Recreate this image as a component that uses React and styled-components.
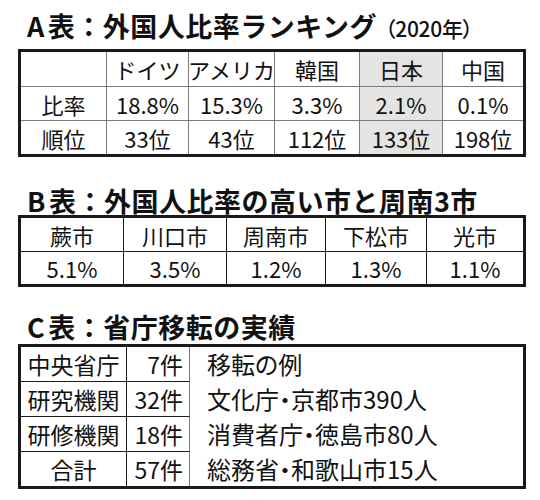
import React from "react";
import styled, { createGlobalStyle } from "styled-components";

const Global = createGlobalStyle`
  html, body { margin: 0; padding: 0; background: #fff; }
  body { font-family: "Noto Sans CJK JP", "Noto Sans", sans-serif; color: #111; }
`;

const Page = styled.div`
  width: 540px;
  height: 500px;
  box-sizing: border-box;
  padding: 11px 14px 0 18px;
  display: flex;
  flex-direction: column;
`;

const Title = styled.h2`
  margin: ${(p) => p.$mt || 0}px 0 ${(p) => p.$mb || 0}px 9px;
  font-family: "Noto Sans CJK JP", sans-serif;
  font-weight: 700;
  font-size: 27px;
  line-height: 29px;
  letter-spacing: 0.5px;
  color: #111;
  white-space: nowrap;
`;

const Letter = styled.span`
  margin-right: 3px;
`;

const Year = styled.span`
  font-weight: 500;
  font-size: 21px;
  letter-spacing: -0.3px;
  margin-left: 8px;
  font-feature-settings: "palt";
`;

const Grid = styled.div`
  display: grid;
  grid-template-columns: ${(p) => p.$cols};
  border: 3px solid #1a1a1a;
  box-sizing: border-box;
  width: 508px;
`;

const Cell = styled.div`
  height: ${(p) => p.$h}px;
  display: flex;
  align-items: center;
  justify-content: ${(p) => p.$justify || "center"};
  padding: ${(p) => p.$pad || "0"};
  box-sizing: content-box;
  font-size: ${(p) => p.$fs || 21}px;
  line-height: 1;
  white-space: nowrap;
  color: #111;
  background: ${(p) => (p.$shade ? "#e4e4e4" : "transparent")};
  border-right: ${(p) => (p.$br ? `1.5px solid ${p.$br}` : "none")};
  border-bottom: ${(p) => (p.$bb ? `1.5px solid ${p.$bb}` : "none")};
  font-feature-settings: ${(p) => (p.$palt ? '"palt"' : "normal")};
`;

const GRAY = "#7a7a7a";
const BLACK = "#1a1a1a";

const tableA = [
  ["", "ドイツ", "アメリカ", "韓国", "日本", "中国"],
  ["比率", "18.8%", "15.3%", "3.3%", "2.1%", "0.1%"],
  ["順位", "33位", "43位", "112位", "133位", "198位"],
];

const tableB = [
  ["蕨市", "川口市", "周南市", "下松市", "光市"],
  ["5.1%", "3.5%", "1.2%", "1.3%", "1.1%"],
];

const tableC = [
  ["中央省庁", "7件", "移転の例"],
  ["研究機関", "32件", "文化庁・京都市390人"],
  ["研修機関", "18件", "消費者庁・徳島市80人"],
  ["合計", "57件", "総務省・和歌山市15人"],
];

export default function App() {
  return (
    <Page>
      <Global />
      <Title $mb={6}>
        <Letter>A</Letter>表：外国人比率ランキング<Year>（2020年）</Year>
      </Title>
      <Grid $cols="86px 82px 86px 85px 83px 1fr">
        {tableA.map((row, r) =>
          row.map((t, c) => (
            <Cell
              key={`${r}-${c}`}
              $h={r === 0 ? 34 : 33}
              $fs={22}
              $shade={c === 4}
              $br={c < 5 ? GRAY : null}
              $bb={r < 2 ? GRAY : null}
            >
              {t}
            </Cell>
          ))
        )}
      </Grid>

      <Title $mt={29} $mb={0}>
        <Letter>B</Letter>表：外国人比率の高い市と周南3市
      </Title>
      <Grid $cols="103px 103px 99px 101px 1fr">
        {tableB.map((row, r) =>
          row.map((t, c) => (
            <Cell
              key={`${r}-${c}`}
              $h={r === 0 ? 33 : 32}
              $fs={22}
              $br={c < 4 ? BLACK : null}
              $bb={r < 1 ? BLACK : null}
            >
              {t}
            </Cell>
          ))
        )}
      </Grid>

      <Title $mt={25} $mb={3}>
        <Letter>C</Letter>表：省庁移転の実績
      </Title>
      <Grid $cols="106px 63px 1fr">
        {tableC.map((row, r) => [
          <Cell
            key={`${r}-a`}
            $h={34}
            $fs={23}
            $br={BLACK}
            $bb={r < 3 ? BLACK : null}
          >
            {row[0]}
          </Cell>,
          <Cell
            key={`${r}-b`}
            $h={34}
            $fs={23}
            $justify="flex-end"
            $pad="0 6px 0 0"
            $br={GRAY}
            $bb={r < 3 ? BLACK : null}
          >
            {row[1]}
          </Cell>,
          <Cell
            key={`${r}-c`}
            $h={34}
            $fs={24}
            $justify="flex-start"
            $pad="0 0 0 17px"
            $palt
          >
            {row[2]}
          </Cell>,
        ])}
      </Grid>
    </Page>
  );
}
